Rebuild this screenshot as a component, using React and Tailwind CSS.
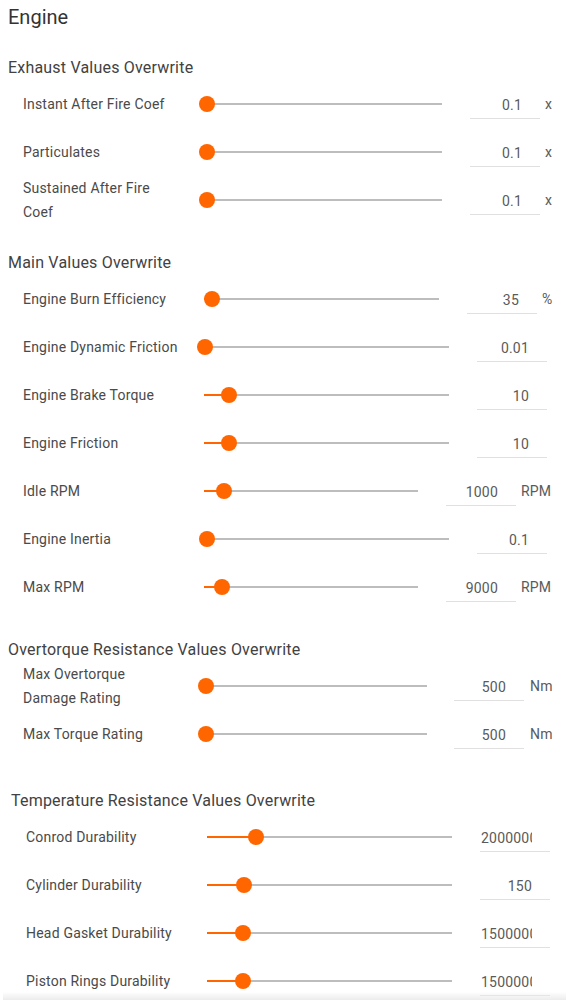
// off = distance from label's left edge to where the track starts
const exhaust = [
  { label: "Instant After Fire Coef", value: "0.1", unit: "x", off: 184, track: 235, pos: 0 },
  { label: "Particulates", value: "0.1", unit: "x", off: 184, track: 235, pos: 0 },
  { label: "Sustained After Fire Coef", value: "0.1", unit: "x", off: 184, track: 235, pos: 0 },
];

const main = [
  { label: "Engine Burn Efficiency", value: "35", unit: "%", off: 181, track: 235, pos: 8 },
  { label: "Engine Dynamic Friction", value: "0.01", off: 182, track: 244, pos: 0 },
  { label: "Engine Brake Torque", value: "10", off: 181, track: 245, pos: 25 },
  { label: "Engine Friction", value: "10", off: 181, track: 245, pos: 25 },
  { label: "Idle RPM", value: "1000", unit: "RPM", off: 181, track: 214, pos: 20 },
  { label: "Engine Inertia", value: "0.1", off: 184, track: 242, pos: 0 },
  { label: "Max RPM", value: "9000", unit: "RPM", off: 181, track: 214, pos: 18 },
];

const overtorque = [
  { label: "Max Overtorque Damage Rating", value: "500", unit: "Nm", off: 183, track: 221, pos: 0, gap: 27, ugap: 6 },
  { label: "Max Torque Rating", value: "500", unit: "Nm", off: 183, track: 221, pos: 0, gap: 27, ugap: 6 },
];

const temperature = [
  { label: "Conrod Durability", value: "2000000", off: 181, track: 245, pos: 49 },
  { label: "Cylinder Durability", value: "150", off: 181, track: 245, pos: 37 },
  { label: "Head Gasket Durability", value: "1500000", off: 181, track: 245, pos: 36 },
  { label: "Piston Rings Durability", value: "1500000", off: 181, track: 245, pos: 36 },
];

function Slider({ width, pos }) {
  return (
    <div className="relative h-[2px] shrink-0 bg-[#bdbdbd]" style={{ width }}>
      <div className="absolute left-0 top-0 h-[2px] bg-[#ff6600]" style={{ width: pos }} />
      <div
        className="absolute top-1/2 h-4 w-4 -translate-x-1/2 -translate-y-1/2 rounded-full bg-[#ff6600]"
        style={{ left: pos }}
      />
    </div>
  );
}

function Row({ row, labelWidth }) {
  return (
    <div className="flex h-12 items-center pl-[15px]">
      <div
        className="shrink-0 text-sm leading-6 tracking-[0.2px] text-[#4a4a4a]"
        style={{ width: labelWidth }}
      >
        {row.label}
      </div>
      <div className="shrink-0" style={{ width: row.off - labelWidth }} />
      <Slider width={row.track} pos={row.pos} />
      <div
        className="shrink-0 border-b border-[#e0e0e0] pt-[6px] pb-[3px] pr-[18px] pl-[1px] w-[70px]"
        style={{ marginLeft: row.gap || 28 }}
      >
        <div className="overflow-hidden whitespace-nowrap text-right text-sm leading-5 tracking-[0.2px] text-[#5a5a5a]">
          {row.value}
        </div>
      </div>
      {row.unit && (
        <div
          className="text-sm leading-5 tracking-[0.2px] text-[#5a5a5a]"
          style={{ marginLeft: row.ugap || 5 }}
        >
          {row.unit}
        </div>
      )}
    </div>
  );
}

function Section({ title, rows, labelWidth, className }) {
  return (
    <div className={className}>
      <h3 className="text-base leading-6 tracking-[0.2px] text-[#424242]">{title}</h3>
      {rows.map((r) => (
        <Row key={r.label} row={r} labelWidth={labelWidth} />
      ))}
    </div>
  );
}

export default function App() {
  return (
    <div
      className="min-h-screen w-[566px] overflow-hidden bg-white pb-4"
      style={{ fontFamily: "Roboto, 'Liberation Sans', sans-serif" }}
    >
      <h2 className="pl-2 pt-[3px] text-xl leading-7 text-[#333]">Engine</h2>
      <Section className="mt-[25px] pl-2" title="Exhaust Values Overwrite" rows={exhaust} labelWidth={152} />
      <Section className="mt-[27px] pl-2" title="Main Values Overwrite" rows={main} labelWidth={168} />
      <Section
        className="mt-[27px] pl-2"
        title="Overtorque Resistance Values Overwrite"
        rows={overtorque}
        labelWidth={152}
      />
      <Section
        className="mt-[31px] pl-[11px]"
        title="Temperature Resistance Values Overwrite"
        rows={temperature}
        labelWidth={152}
      />
      <div className="pointer-events-none fixed bottom-0 left-[3px] right-0 h-2 bg-gradient-to-t from-[#ececec] to-transparent" />
    </div>
  );
}
